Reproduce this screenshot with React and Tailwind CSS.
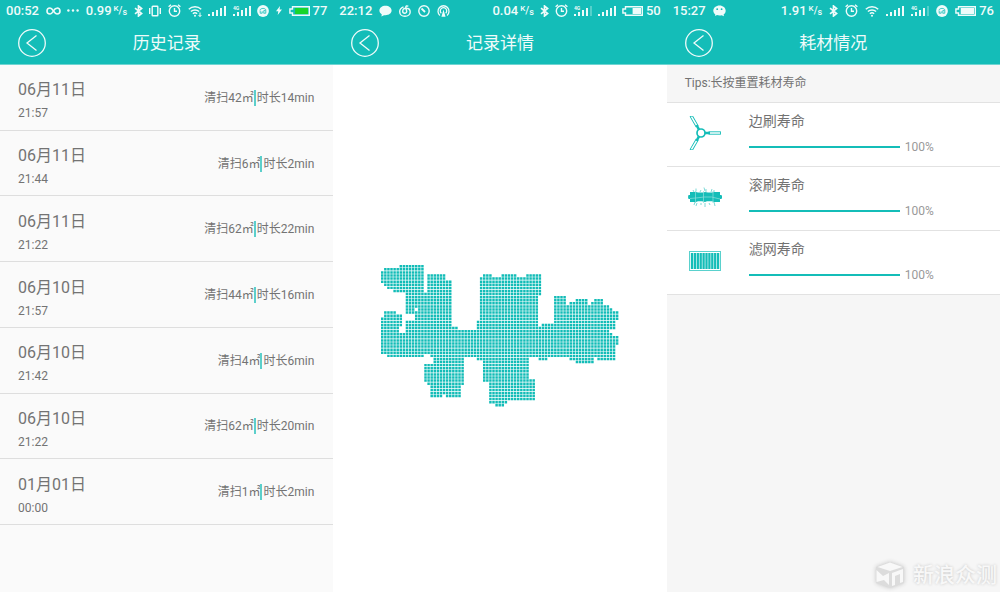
const RECORDS = [
  { date: "06月11日", time: "21:57", area: 42, minutes: 14 },
  { date: "06月11日", time: "21:44", area: 6, minutes: 2 },
  { date: "06月11日", time: "21:22", area: 62, minutes: 22 },
  { date: "06月10日", time: "21:57", area: 44, minutes: 16 },
  { date: "06月10日", time: "21:42", area: 4, minutes: 6 },
  { date: "06月10日", time: "21:22", area: 62, minutes: 20 },
  { date: "01月01日", time: "00:00", area: 1, minutes: 2 },
];

// Cleaned cells, one entry per grid row: [first column, end column) pairs
const MAP_ROWS = [
  [[6, 14]],
  [[1, 14]],
  [[0, 14]],
  [[0, 14], [15, 21], [33, 36], [39, 44], [47, 52]],
  [[0, 14], [15, 21], [32, 52]],
  [[0, 14], [15, 23], [32, 52]],
  [[1, 14], [15, 23], [32, 52]],
  [[2, 14], [15, 23], [32, 52]],
  [[4, 14], [15, 23], [32, 52]],
  [[8, 23], [32, 52]],
  [[8, 23], [32, 51], [56, 60]],
  [[8, 23], [32, 51], [56, 60], [63, 67], [69, 72]],
  [[8, 23], [32, 51], [56, 60], [61, 67], [68, 72]],
  [[8, 23], [32, 51], [56, 74]],
  [[8, 11], [12, 23], [32, 51], [56, 75]],
  [[1, 5], [8, 23], [32, 51], [56, 77]],
  [[1, 7], [11, 23], [32, 51], [56, 77]],
  [[0, 7], [11, 23], [32, 51], [56, 77]],
  [[0, 7], [8, 23], [31, 51], [56, 76]],
  [[0, 7], [8, 23], [31, 51], [52, 76]],
  [[0, 6], [8, 25], [31, 76]],
  [[0, 6], [8, 74]],
  [[0, 75]],
  [[0, 77]],
  [[0, 77]],
  [[0, 77]],
  [[0, 76]],
  [[0, 76]],
  [[0, 76]],
  [[2, 14], [16, 76]],
  [[17, 27], [31, 48], [51, 54], [61, 69], [70, 76]],
  [[17, 27], [33, 48], [63, 69]],
  [[14, 27], [33, 48]],
  [[14, 27], [33, 48]],
  [[14, 27], [33, 48]],
  [[14, 27], [33, 48]],
  [[14, 27], [33, 48]],
  [[14, 27], [33, 50]],
  [[15, 27], [35, 50]],
  [[16, 26], [35, 50]],
  [[16, 26], [35, 50]],
  [[16, 26], [35, 50]],
  [[16, 20], [21, 26], [35, 50]],
  [[35, 50]],
  [[35, 41]],
  [[37, 40]],
];

function CleaningMap() {
  const path = MAP_ROWS.flatMap((runs, row) =>
    runs.flatMap(([start, end]) =>
      Array.from(
        { length: end - start },
        (_, i) => `M${(start + i) * 10} ${row * 10}h8v8h-8z`
      )
    )
  ).join("");

  return (
    <svg viewBox="0 0 770 460" className="h-auto w-[238px]" role="img" aria-label="清扫地图">
      <path d={path} fill="#12bcb7" />
    </svg>
  );
}

function Speed({ value }) {
  return (
    <span className="flex items-center gap-[2px]">
      {value}
      <span className="flex h-3 text-[8px] leading-3">
        <span className="-mt-[2px]">K</span>
        <span className="text-[10px]">/</span>
        <span className="mt-px text-[9px]">s</span>
      </span>
    </span>
  );
}

function Bluetooth() {
  return (
    <svg viewBox="0 0 9 12" className="h-3 w-[9px]" fill="none" stroke="currentColor" strokeWidth="1.7">
      <path d="M1 3.2 7.6 8.4 4.5 11V1L7.6 3.6 1 8.8" />
    </svg>
  );
}

function Vibrate() {
  return (
    <svg viewBox="0 0 12 12" className="size-3" fill="none" stroke="currentColor" strokeWidth="1.4">
      <rect x="3.2" y="1.2" width="5.6" height="9.6" rx=".6" />
      <path d="M.7 3v6M11.3 3v6" />
    </svg>
  );
}

function Alarm() {
  return (
    <svg viewBox="0 0 13 13" className="size-[13px]" fill="none" stroke="currentColor" strokeWidth="1.4">
      <circle cx="6.5" cy="7" r="5.2" />
      <path d="M6.5 4v3.2H9M.6 2.8 3 .8M12.4 2.8 10 .8" />
    </svg>
  );
}

function Wifi({ transfer }) {
  return (
    <svg viewBox="0 0 14 12" className="h-3 w-[14px]" fill="none" stroke="currentColor" strokeWidth="1.5">
      <path d="M.8 4.2a9 9 0 0 1 12.4 0M2.9 6.5a6 6 0 0 1 8.2 0M4.9 8.7a3 3 0 0 1 4.2 0" />
      <circle cx="7" cy="10.7" r="1" fill="currentColor" stroke="none" />
      {transfer && <path d="M12 7.5v4M10.600 10l1.400 1.600L13.400 10" strokeWidth="1" />}
    </svg>
  );
}

function Signal({ lte, bars = 5 }) {
  return (
    <svg viewBox="0 0 18 12" className="h-3 w-[18px]" fill="currentColor">
      {[0, 1, 2, 3, 4].map((i) => (
        <rect
          key={i}
          x={i * 4}
          y={9 - i * 2}
          width="2"
          height={2 + i * 2}
          opacity={i < bars ? 1 : 0.3}
        />
      ))}
      {lte && (
        <text x="0" y="4.5" fontSize="5" fontWeight="700">
          4G
        </text>
      )}
    </svg>
  );
}

function Badge() {
  return (
    <svg viewBox="0 0 12 12" className="size-3">
      <circle cx="6" cy="6" r="5.9" fill="currentColor" />
      <path
        d="M2.8 5.2C4 2.8 8 2.8 9.2 5.2M3.2 5.6v2.6h2V6.3M6.8 8.4V5.6h2v2.6h-2"
        fill="none"
        stroke="#14bdb8"
        strokeWidth=".8"
      />
    </svg>
  );
}

function Battery({ level, charging }) {
  return (
    <svg viewBox="0 0 21 10" className="h-[10px] w-[21px]">
      <path d="M3.5.7h16.8v8.6H3.5V7H.9V3h2.6z" fill="none" stroke="currentColor" strokeWidth="1.4" />
      <rect
        x={19 - level * 14}
        y="2"
        width={level * 14}
        height="6"
        fill={charging ? "#18d52c" : "currentColor"}
      />
    </svg>
  );
}

function Bolt() {
  return (
    <svg viewBox="0 0 6 9" className="h-[9px] w-[6px]" fill="currentColor">
      <path d="M4 0 0 5.2h2.3L1.7 9 6 3.6H3.6z" />
    </svg>
  );
}

function Infinity() {
  return (
    <svg viewBox="0 0 15 8" className="h-2 w-[15px]" fill="none" stroke="currentColor" strokeWidth="1.6">
      <path d="M11 1.5C8 .2 7 7.2 4 7A3 3 0 0 1 4 1c3 0 4 6 7 6a3 3 0 0 0 0-6" />
    </svg>
  );
}

function Dots() {
  return (
    <svg viewBox="0 0 12 3" className="h-[3px] w-3" fill="currentColor">
      <circle cx="1.4" cy="1.5" r="1.2" />
      <circle cx="6" cy="1.5" r="1.2" />
      <circle cx="10.6" cy="1.5" r="1.2" />
    </svg>
  );
}

function Bubble() {
  return (
    <svg viewBox="0 0 13 12" className="h-3 w-[13px]" fill="currentColor">
      <path d="M6.5.8C3 .8.4 2.9.4 5.6c0 1.6 1 3 2.4 3.8L2.4 11.6 5 10.2c4.2.6 7.6-1.6 7.6-4.6C12.6 2.9 10 .8 6.5.8z" />
    </svg>
  );
}

function WeChat() {
  return (
    <svg viewBox="0 0 13 12" className="h-3 w-[13px]">
      <path
        d="M6.5.6C3 .6.3 2.9.3 5.800c0 1.500.8 2.800 2 3.700L2 11l2-.9c1 .4 3 .6 4.600.200L11 11.200l-.4-1.600c1.300-.9 2.100-2.300 2.100-3.800C12.700 2.900 10 .6 6.500.6z"
        fill="currentColor"
      />
      <circle cx="4.2" cy="4.200" r=".9" fill="#14bdb8" />
      <circle cx="8.600" cy="4.200" r=".9" fill="#14bdb8" />
    </svg>
  );
}

function CloudMusic() {
  return (
    <svg viewBox="0 0 12 12" className="size-3" fill="none" stroke="currentColor" strokeWidth="1.4">
      <path d="M4.5 1.8C2 2.7.7 4.5.7 6.7c0 2.7 2.3 4.6 5.2 4.6 3 0 5.3-1.9 5.3-4.4C11.2 4.6 9.5 3.2 7 3.2 4.8 3.2 3.7 4.8 3.7 6.3c0 2.6 4 2.7 4 0L6.8 2.5C6.6 1 8 .4 9.3 1.3" />
    </svg>
  );
}

function Compass() {
  return (
    <svg viewBox="0 0 12 12" className="size-3" fill="none" stroke="currentColor" strokeWidth="1.4">
      <circle cx="6" cy="6" r="5.2" />
      <path d="M3.5 3.5 7 7" strokeWidth="1.8" />
    </svg>
  );
}

function Hotspot() {
  return (
    <svg viewBox="0 0 13 12" className="h-3 w-[13px]" fill="none" stroke="currentColor" strokeWidth="1.3">
      <path d="M3 10.5a5.500 5.500 0 1 1 7 0M4.3 8.2a3.2 3.2 0 1 1 4.4 0" />
      <path d="M6.5 5.5v.1M5.5 11l1-3.5 1 3.5z" strokeWidth="1.6" />
    </svg>
  );
}

function Header({ title, status }) {
  return (
    <header className="border-b border-[#6fd5d2] bg-[#14bdb8] text-[#effbfa]">
      <div className="flex h-[21px] items-center justify-between pr-[6px] pl-[6px] text-[13px] leading-5 font-medium">
        {status}
      </div>
      <div className="grid h-[43px] grid-cols-[28px_1fr_28px] items-center px-[18px]">
        <button type="button" aria-label="返回" className="size-7">
          <svg viewBox="0 0 28 28" className="size-7" fill="none" stroke="currentColor" strokeWidth="1.3">
            <circle cx="14" cy="14" r="13.3" />
            <path d="M18.5 6.500 9 14l9.5 7.5" />
          </svg>
        </button>
        <h1 className="pt-px text-center text-[17px] leading-6">{title}</h1>
      </div>
    </header>
  );
}

function HistoryScreen() {
  return (
    <section className="flex flex-col bg-[#fafafa]">
      <Header
        title="历史记录"
        status={
          <>
            <span>00:52</span>
            <Infinity />
            <Dots />
            <Speed value="0.99" />
            <Bluetooth />
            <Vibrate />
            <Alarm />
            <Wifi transfer />
            <Signal />
            <Signal lte />
            <Badge />
            <Bolt />
            <span className="flex items-center gap-[3px]">
              <Battery level={0.92} charging />
              77
            </span>
          </>
        }
      />
      <ul className="flex min-h-[460px] flex-col">
        {RECORDS.map((record) => (
          <li
            key={`${record.date} ${record.time}`}
            className="flex flex-1 items-center justify-between border-b border-[#dedede] pt-px pr-[19px] pl-[18px]"
          >
            <div className="pt-[7px]">
              <p className="text-[16px] leading-6">{record.date}</p>
              <p className="text-[12px] leading-[22px]">{record.time}</p>
            </div>
            <p className="flex items-center text-[12px] leading-4">
              <span>清扫{record.area}㎡</span>
              <span className="mr-px h-4 w-[2px] bg-[#5ccfcb]" />
              <span>时长{record.minutes}min</span>
            </p>
          </li>
        ))}
      </ul>
    </section>
  );
}

function DetailScreen() {
  return (
    <section className="flex flex-col bg-white">
      <Header
        title="记录详情"
        status={
          <>
            <span className="flex items-center gap-[7px]">
              22:12
              <Bubble />
              <CloudMusic />
              <Compass />
              <Hotspot />
            </span>
            <span className="flex items-center gap-[6px]">
              <Speed value="0.04" />
              <Bluetooth />
              <Alarm />
              <Signal lte bars={4} />
              <Signal />
              <span className="flex items-center gap-[3px]">
                <Battery level={0.6} />
                50
              </span>
            </span>
          </>
        }
      />
      <div className="flex flex-1 items-center justify-center pt-4 pl-px">
        <CleaningMap />
      </div>
    </section>
  );
}

function SideBrush() {
  return (
    <svg viewBox="0 0 34 34" className="size-[34px]" fill="none" stroke="#14bdb8">
      {[0, 120, 240].map((angle) => (
        <g key={angle} transform={`rotate(${angle} 13 17)`}>
          <path d="M17 17h5" strokeWidth="2.5" />
          <rect x="21" y="15.8" width="11.5" height="2.4" strokeWidth=".9" />
        </g>
      ))}
      <circle cx="13" cy="17" r="4" strokeWidth="1.700" fill="#fff" />
    </svg>
  );
}

function RollerBrush() {
  return (
    <svg viewBox="0 0 34 34" className="size-[34px]">
      <path
        d="M.5 15H2v-3h6l2 .6h5l2-.6 3 .6h4l2-.6h6v3h1.5l.8 2-.8 2H32v3h-6l-2-.8h-5l-2 .8-3-.8h-4l-2 .8H2v-3H.5L0 17z"
        fill="#14bdb8"
      />
      <path d="M7.500 11v12M15.500 11v12M25 11v12M2 18.500q7-.5 14-1.500t16 2" fill="none" stroke="#8fdedb" strokeWidth=".7" />
      <path
        d="M5 10l1 2M8 8.500v3M13 10l-1 2M16 7.500l1 3.500M18 9v3M24 9l-1 3M26 10v2M7 22l-1 3M9 23l-1 3M13 23v2M17 23v4M21 23l1 2M26 22l1 4"
        fill="none"
        stroke="#5fd1cd"
        strokeWidth=".8"
      />
    </svg>
  );
}

function Filter() {
  return (
    <svg viewBox="0 0 34 34" className="size-[34px]" fill="none" stroke="#14bdb8">
      <rect x="1.5" y="7.5" width="31" height="19" strokeWidth="1" opacity=".7" />
      {Array.from({ length: 10 }, (_, i) => (
        <path key={i} d={`M${4 + i * 2.9} 9v16`} strokeWidth="2.3" />
      ))}
    </svg>
  );
}

const PARTS = [
  { id: "side", name: "边刷寿命", icon: <SideBrush />, life: 100 },
  { id: "roller", name: "滚刷寿命", icon: <RollerBrush />, life: 100 },
  { id: "filter", name: "滤网寿命", icon: <Filter />, life: 100 },
];

function PartsScreen() {
  return (
    <section className="relative flex flex-col bg-[#f6f6f6]">
      <Header
        title="耗材情况"
        status={
          <>
            <span className="flex items-center gap-[7px]">
              15:27
              <WeChat />
            </span>
            <span className="flex items-center gap-[7px]">
              <Speed value="1.91" />
              <Bluetooth />
              <Alarm />
              <Wifi />
              <Signal />
              <Signal lte bars={4} />
              <Badge />
              <span className="flex items-center gap-[3px]">
                <Battery level={0.95} />
                76
              </span>
            </span>
          </>
        }
      />
      <p className="border-b border-[#e2e2e2] px-[18px] py-[9px] text-[12px] leading-[19px]">
        Tips:长按重置耗材寿命
      </p>
      <ul>
        {PARTS.map((part) => (
          <li
            key={part.id}
            className="flex h-16 items-center gap-[27px] border-b border-[#e2e2e2] bg-white pb-[3px] pl-[21px]"
          >
            {part.icon}
            <div className="flex-1">
              <p id={part.id} className="text-[14px] leading-5">
                {part.name}
              </p>
              <div className="mt-[7px] flex items-center gap-[5px] text-[12px] leading-[18px] text-[#999]">
                <div
                  role="progressbar"
                  aria-labelledby={part.id}
                  aria-valuenow={part.life}
                  className="h-[2px] w-[151px] bg-[#e5e5e5]"
                >
                  <div className="h-full bg-[#14bdb8]" style={{ width: `${part.life}%` }} />
                </div>
                {part.life}%
              </div>
            </div>
          </li>
        ))}
      </ul>
      <div className="absolute right-[3px] bottom-[3px] flex items-center gap-[8px] text-[21px] leading-7 font-medium text-[#f8f8f8] [text-shadow:0_0_3px_#c4c4c4]">
        <svg viewBox="0 0 30 28" className="h-7 w-[30px] drop-shadow-[0_0_2px_#c4c4c4]">
          <path d="M15 1 29 6v16l-14 5L1 22V6z" fill="#dcdcdc" />
          <path d="M15 1.500 27.500 6 15 10 2.500 6z" fill="#f8f8f8" />
          <path d="M1.500 9 8 15l6-3v12l-5-5-7.500 2z" fill="#f8f8f8" />
          <path d="M17 12l11-4v13l-3 1v-9l-5 2v9l-3 1z" fill="#f8f8f8" />
        </svg>
        新浪众测
      </div>
    </section>
  );
}

export default function App() {
  return (
    <main className="grid min-h-screen grid-cols-3 font-[Roboto,'Noto_Sans_CJK_SC',sans-serif] text-[#737373]">
      <HistoryScreen />
      <DetailScreen />
      <PartsScreen />
    </main>
  );
}
